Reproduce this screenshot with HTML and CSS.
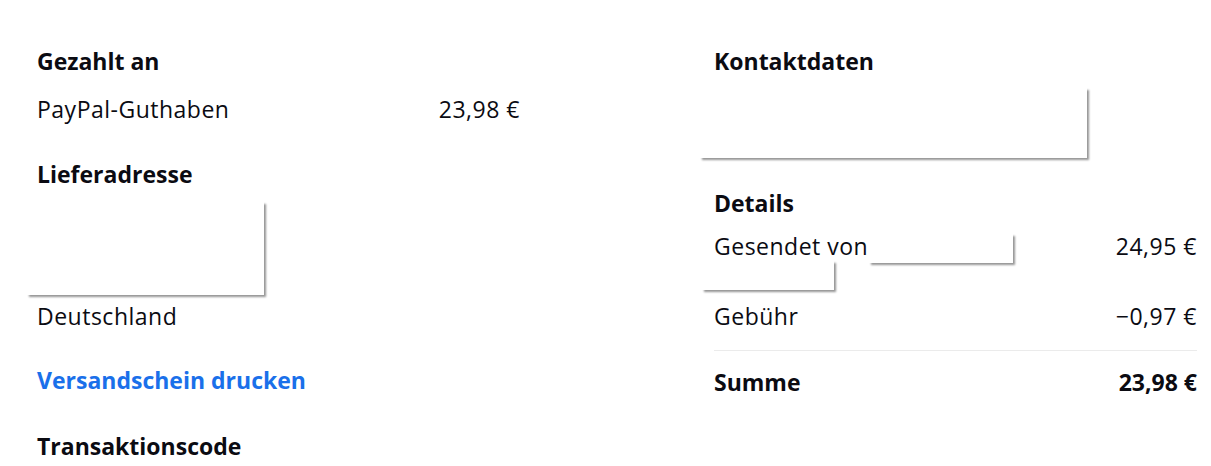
FILE: index.html
```html
<!DOCTYPE html>
<html lang="de">
<head>
<meta charset="utf-8">
<title>Transaktionsdetails</title>
<link rel="stylesheet" href="styles.css">
</head>
<body>
<main class="page">
  <section class="col">
    <h2 class="heading">Gezahlt an</h2>
    <div class="row row-paid">
      <span>PayPal-Guthaben</span>
      <span>23,98 €</span>
    </div>
    <h2 class="heading heading-address">Lieferadresse</h2>
    <div class="address">
      <div class="mask mask-address"></div>
    </div>
    <div class="line">Deutschland</div>
    <a class="link" href="#">Versandschein drucken</a>
    <h2 class="heading heading-code">Transaktionscode</h2>
  </section>
  <section class="col">
    <h2 class="heading">Kontaktdaten</h2>
    <div class="contact">
      <div class="mask mask-contact"></div>
    </div>
    <h2 class="heading">Details</h2>
    <div class="row row-sent">
      <span class="sent-label">Gesendet von<br>&nbsp;</span>
      <span>24,95 €</span>
      <div class="mask mask-name1"></div>
      <div class="mask mask-name2"></div>
    </div>
    <div class="row row-fee">
      <span>Gebühr</span>
      <span>−0,97 €</span>
    </div>
    <hr class="divider">
    <div class="row row-total">
      <span>Summe</span>
      <span>23,98 €</span>
    </div>
  </section>
</main>
</body>
</html>
```

FILE: styles.css
```css
* { box-sizing: border-box; }
html, body { margin: 0; padding: 0; background: #ffffff; }
body {
  font-family: "Open Sans", "Noto Sans", sans-serif;
  font-size: 23px;
  line-height: 28px;
  letter-spacing: 0.5px;
  color: #0b0b12;
  overflow: hidden;
}
.page {
  display: grid;
  grid-template-columns: 483px 483px;
  column-gap: 194px;
  padding: 47px 14px 0 37px;
}
.col { display: flex; flex-direction: column; }
.heading {
  margin: 0;
  font-size: 23px;
  line-height: 28px;
  font-weight: 700;
  letter-spacing: 0;
}
.row {
  display: flex;
  justify-content: space-between;
  align-items: flex-start;
  position: relative;
}
.row-paid { margin-top: 20px; }
.heading-address { margin-top: 37px; }
.address { position: relative; height: 114px; }
.contact { position: relative; height: 114px; }
.line { line-height: 28px; }
.link {
  margin-top: 36px;
  color: #1a70ea;
  font-weight: 700;
  letter-spacing: 0;
  text-decoration: none;
  line-height: 28px;
  align-self: flex-start;
}
.heading-code { margin-top: 38px; }
.row-sent { margin-top: 15px; }
.row-fee { margin-top: 14px; }
.divider {
  margin: 20px 0 0;
  border: 0;
  height: 1px;
  background: #ebebeb;
}
.row-total { margin-top: 17px; font-weight: 700; letter-spacing: 0; }
.mask {
  position: absolute;
  background: #ffffff;
  box-shadow: 3px 3px 2px -1px rgba(0, 0, 0, 0.42);
}
.mask-address { top: 12px; left: -12px; width: 239px; height: 95px; }
.mask-contact { top: 11px; left: -16px; width: 389px; height: 72px; }
.mask-name1 { top: 0; left: 153px; width: 146px; height: 31px; }
.mask-name2 { top: 27px; left: -14px; width: 134px; height: 31px; }
```
